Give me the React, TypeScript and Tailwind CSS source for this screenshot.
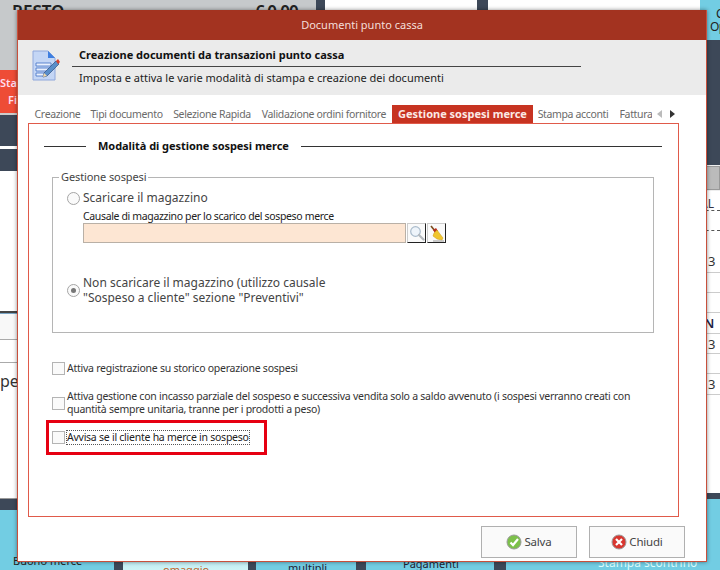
const font = "font-['Noto_Sans','Liberation_Sans',sans-serif]";

function DocIcon() {
  return (
    <svg width="30" height="32" viewBox="0 0 30 32" className="shrink-0">
      <path d="M2 1h15l7 7v22H2z" fill="#c4d6f5" stroke="#8fa8dc" />
      <path d="M17 1l7 7h-7z" fill="#3f7fe0" />
      <path d="M5 13h15v3H5zM5 18h13v3H5zM5 23h10v3H5z" fill="#eaf1fd" stroke="#3f6fc4" strokeWidth="0.8" />
      <path d="M12 27l1-4 12-12 3 3-12 12z" fill="#5a8ec9" stroke="#30507f" strokeWidth="0.7" />
      <path d="M25 11l2-2 2 3-2 2z" fill="#d9402b" />
      <path d="M12 27l1-4 3 3z" fill="#f3d9a8" />
    </svg>
  );
}

function Magnifier() {
  return (
    <svg width="16" height="16" viewBox="0 0 16 16">
      <circle cx="6.5" cy="6.5" r="4.8" fill="#eef4fa" stroke="#a9bbcb" strokeWidth="1.2" />
      <path d="M10 10l4.5 4.5" stroke="#b3b8bd" strokeWidth="2.2" strokeLinecap="round" />
    </svg>
  );
}

function Broom() {
  return (
    <svg width="16" height="17" viewBox="0 0 16 17">
      <path d="M2 1l4 5" stroke="#7a4a1c" strokeWidth="1.6" />
      <path d="M4 5l3-2 2 3-3 2z" fill="#b8321f" />
      <path d="M5 8l3-3 6 8-1 2-5-1-4-3z" fill="#f0c52e" stroke="#c99a16" strokeWidth="0.5" />
      <path d="M4 16h11" stroke="#999" strokeWidth="1" />
    </svg>
  );
}

function OkIcon() {
  return (
    <svg width="16" height="16" viewBox="0 0 16 16">
      <circle cx="8" cy="8" r="7" fill="#7cc04a" stroke="#9a9a9a" />
      <path d="M4.5 8.5l2.5 2.5 5-6" fill="none" stroke="#fff" strokeWidth="2.2" />
    </svg>
  );
}

function CloseIcon() {
  return (
    <svg width="16" height="16" viewBox="0 0 16 16">
      <circle cx="8" cy="8" r="7" fill="#d8362f" stroke="#9a9a9a" />
      <path d="M5 5l6 6M11 5l-6 6" fill="none" stroke="#fff" strokeWidth="2.2" />
    </svg>
  );
}

function Radio({ checked }: { checked?: boolean }) {
  return (
    <span className="flex h-[13px] w-[13px] shrink-0 items-center justify-center rounded-full border border-[#a5a5a5] bg-[#fafafa]">
      {checked && <span className="h-[5px] w-[5px] rounded-full bg-[#777]" />}
    </span>
  );
}

function Check() {
  return <span className="h-[13px] w-[13px] shrink-0 border border-[#b4b4b4] bg-[#fafafa]" />;
}

function Tab({ label, width, active }: { label: string; width: string; active?: boolean }) {
  return (
    <div
      className={
        active
          ? `flex h-[18px] items-center justify-center bg-[#c73321] text-[11px] font-bold text-[#fbeae6] ${width}`
          : `flex h-[18px] items-center justify-center whitespace-nowrap pt-px text-[10.5px] tracking-[-0.35px] text-[#6a6a6a] ${width}`
      }
    >
      {label}
    </div>
  );
}

function Background() {
  return (
    <div className="flex h-full w-full">
      <div className="flex w-[700px] flex-col">
        <div className="flex h-[10px] overflow-hidden">
          <div className="flex w-[316px] justify-between overflow-hidden bg-[#c6c9cb] pl-3 pr-[18px] pt-[2px] text-[17px] font-semibold leading-5 text-[#222]">
            <span>RESTO</span>
            <span className="tracking-[-0.8px]">€ 0,00</span>
          </div>
          <div className="w-[9px] bg-[#3d4858]" />
          <div className="w-[152px] bg-white" />
          <div className="w-[11px] bg-[#3d4858]" />
          <div className="flex-1 bg-white" />
        </div>
        <div className="flex h-[500px] flex-col text-[14px] text-[#333]">
          <div className="h-[60px] bg-[#c6c9cb]" />
          <div className="flex h-[43px] w-[17px] flex-col items-start overflow-hidden bg-[#ee4c36] pt-1 text-[11px] font-semibold leading-[17px] text-[#fde]">
            <span>Stat</span>
            <span className="ml-2">Fi</span>
          </div>
          <div className="h-[2px] bg-[#ccc]" />
          <div className="h-[31px] bg-[#3d4858]" />
          <div className="h-[3px] bg-white" />
          <div className="h-[22px] bg-[#3d4858]" />
          <div className="h-[140px] bg-white" />
          <div className="h-[2px] bg-[#444]" />
          <div className="h-[26px] border-t border-[#7aa5c5] bg-[#f8f8f8]" />
          <div className="h-[23px] border-t border-[#aaa] bg-white" />
          <div className="h-[136px] border-t border-[#aaa] bg-white pt-2 text-[16px] leading-5">
            pe
          </div>
          <div className="h-[12px] border-t border-[#999] bg-[#3d4858]" />
        </div>
        <div className="flex h-[60px] items-end overflow-hidden whitespace-nowrap text-[11px] leading-4">
          <div className="h-full w-[114px] bg-[#72cde3] pl-[13px] pt-[43px] text-[#222]">Buono merce</div>
          <div className="h-full w-[9px] bg-[#3d4858]" />
          <div className="h-full w-[125px] bg-gradient-to-b from-[#72cde3] to-[#cdf3f6] pl-10 pt-[52px] text-[#c2632a]">omaggio</div>
          <div className="h-full w-[8px] bg-[#3d4858]" />
          <div className="h-full w-[100px] bg-[#72cde3] pl-8 pt-[50px] text-[#223]">multipli</div>
          <div className="h-full w-[10px] bg-[#3d4858]" />
          <div className="h-full w-[128px] bg-[#72cde3] pl-[37px] pt-[46px] text-[#223]">Pagamenti</div>
          <div className="h-full w-[12px] bg-[#3d4858]" />
          <div className="h-full flex-1 bg-[#72cde3] pl-[92px] pt-[45px] text-[12px] text-[#dff]">Stampa scontrino</div>
        </div>
      </div>
      <div className="flex w-[20px] flex-col overflow-hidden">
        <div className="h-[40px] whitespace-nowrap bg-[#72cde3] pl-[10px] pt-[7px] text-[12px] leading-[13px] tracking-[-0.5px] text-[#222]">
          <div className="pl-[6px]">C</div>
          <div>Op</div>
        </div>
        <div className="h-[125px] bg-[#3d4858]" />
        <div className="flex h-[26px] items-stretch bg-[#eee] py-[1px] pl-[3px]">
          <div className="flex-1 border border-[#999] bg-[#bbb]" />
        </div>
        <div className="h-[20px] border-b border-dashed border-[#555] bg-white text-[12px] leading-[26px] text-[#334]">AL</div>
        <div className="h-[20px] border-b border-dashed border-[#555] bg-white" />
        <div className="h-[20px] bg-white" />
        <div className="h-[22px] border-b border-[#ccc] bg-white pl-2 text-[13px] leading-[20px] text-[#333]">3</div>
        <div className="h-[20px] border-b border-[#ccc] bg-white" />
        <div className="h-[20px] border-b border-[#ccc] bg-white" />
        <div className="h-[21px] border-b border-[#ccc] bg-white pl-1 text-[13px] font-semibold leading-5 text-[#224]">N</div>
        <div className="h-[20px] border-b border-[#ccc] bg-white pl-2 text-[13px] leading-5 text-[#333]">3</div>
        <div className="h-[20px] border-b border-[#ccc] bg-white" />
        <div className="h-[21px] border-b border-[#ccc] bg-white pl-2 text-[13px] leading-5 text-[#333]">3</div>
        <div className="h-[98px] bg-white" />
        <div className="h-[6px] bg-[#3d4858]" />
        <div className="flex-1 bg-[#72cde3]" />
      </div>
    </div>
  );
}

export default function App() {
  return (
    <div className={`relative h-[570px] w-[720px] overflow-hidden ${font}`}>
      <Background />

      <div className="absolute left-[17px] top-[10px] flex h-[552px] w-[690px] flex-col border border-t-0 border-[#c8503c] bg-white shadow-[0_0_4px_rgba(0,0,0,0.45)]">
        <div className="flex h-[30px] shrink-0 items-center justify-center bg-[#a33320] pt-px text-[11px] text-[#f4dfda]">
          Documenti punto cassa
        </div>

        <div className="flex h-[55px] shrink-0 bg-[#ebebeb] pl-[13px] pt-[10px]">
          <DocIcon />
          <div className="ml-[11px] w-[509px]">
            <div className="-mt-[2px] border-b border-[#444] pb-[5px] pl-[7px] text-[11px] font-bold leading-[13px] text-[#111]">
              Creazione documenti da transazioni punto cassa
            </div>
            <div className="pl-[7px] pt-[4px] text-[11px] leading-[13px] text-[#222]">
              Imposta e attiva le varie modalità di stampa e creazione dei documenti
            </div>
          </div>
        </div>

        <div className="flex flex-1 flex-col pl-[9px] pr-[27px] pt-[10px]">
          <div className="flex h-[18px] shrink-0 items-center">
            <div className="w-[7px]" />
            <Tab label="Creazione" width="w-[47px] mr-[11px]" />
            <Tab label="Tipi documento" width="w-[69px] mr-[12px]" />
            <Tab label="Selezione Rapida" width="w-[78px] mr-[12px]" />
            <Tab label="Validazione ordini fornitore" width="w-[122px] mr-[7px]" />
            <Tab label="Gestione sospesi merce" width="w-[141px] mr-[5px]" active />
            <Tab label="Stampa acconti" width="w-[70px] mr-[12px]" />
            <Tab label="Fattura" width="w-[32px] overflow-hidden" />
            <div className="ml-[5px] h-0 w-0 border-y-[4px] border-r-[5px] border-y-transparent border-r-[#bbb]" />
            <div className="ml-[8px] h-0 w-0 border-y-[4px] border-l-[5px] border-y-transparent border-l-[#333]" />
          </div>

          <div className="relative ml-px h-[394px] w-[651px] border border-[#e05a4a] pl-[15px] pr-[16px] pt-[15px]">
            <div className="flex items-center">
              <div className="h-px w-[42px] bg-[#333]" />
              <span className="mx-[12px] whitespace-nowrap text-[11px] font-bold leading-[14px] tracking-[-0.05px] text-[#111]">
                Modalità di gestione sospesi merce
              </span>
              <div className="h-px flex-1 bg-[#333]" />
            </div>

            <div className="relative ml-[8px] mt-[24px] h-[156px] w-[602px] border border-[#b5b5b5] pl-[14px] pt-[12px]">
              <span className="absolute -top-[8px] left-[6px] bg-white px-[2px] text-[11px] leading-[14px] tracking-[-0.1px] text-[#444]">
                Gestione sospesi
              </span>
              <div className="flex items-center gap-[3px] text-[12px] leading-4 text-[#444]">
                <Radio />
                Scaricare il magazzino
              </div>
              <div className="pl-[16px] pt-[4px] text-[10.5px] leading-[13px] tracking-[-0.35px] text-[#222]">
                Causale di magazzino per lo scarico del sospeso merce
              </div>
              <div className="ml-[16px] flex">
                <div className="h-[20px] w-[323px] border border-[#b9b0a6] bg-[#fde6d3]" />
                <div className="ml-px flex h-[20px] w-[19px] items-center justify-center border border-[#ccc] border-b-[#222] border-r-[#222] bg-[#fafafa]">
                  <Magnifier />
                </div>
                <div className="ml-px flex h-[20px] w-[19px] items-center justify-center border border-[#ccc] border-b-[#222] border-r-[#222] bg-[#fafafa]">
                  <Broom />
                </div>
              </div>
              <div className="mt-[32px] flex items-center gap-[3px] text-[12px] leading-[15px] text-[#444]">
                <Radio checked />
                <div>
                  Non scaricare il magazzino (utilizzo causale
                  <br />
                  "Sospeso a cliente" sezione "Preventivi"
                </div>
              </div>
            </div>

            <div className="ml-[8px] mt-[29px] flex items-center gap-[2px] text-[10.5px] leading-[13px] tracking-[-0.25px] text-[#333]">
              <Check />
              Attiva registrazione su storico operazione sospesi
            </div>
            <div className="ml-[8px] mt-[15px] flex items-center gap-[2px] text-[10.5px] leading-[13px] tracking-[-0.25px] text-[#333]">
              <Check />
              <div className="whitespace-nowrap">
                Attiva gestione con incasso parziale del sospeso e successiva vendita solo a saldo avvenuto (i sospesi verranno creati con
                <br />
                quantità sempre unitaria, tranne per i prodotti a peso)
              </div>
            </div>
            <div className="relative ml-[8px] mt-[14px] flex items-center gap-px text-[10.5px] leading-[13px] tracking-[-0.25px] text-[#222]">
              <Check />
              <span className="border border-dotted border-[#555]">Avvisa se il cliente ha merce in sospeso</span>
              <div className="absolute -left-[6px] -top-[10px] h-[35px] w-[221px] border-[3px] border-[#e60012]" />
            </div>
          </div>

          <div className="-mr-[6px] flex flex-1 justify-end gap-3 pt-[9px]">
            <button className="flex h-[32px] w-[96px] items-center justify-center gap-[2px] border border-[#b0b0b0] bg-[#fafafa] text-[11.5px] tracking-[-0.2px] text-[#444]">
              <OkIcon />
              Salva
            </button>
            <button className="flex h-[32px] w-[96px] items-center justify-center gap-[2px] border border-[#b0b0b0] bg-[#fafafa] text-[11.5px] tracking-[-0.2px] text-[#444]">
              <CloseIcon />
              Chiudi
            </button>
          </div>
        </div>
      </div>
    </div>
  );
}
